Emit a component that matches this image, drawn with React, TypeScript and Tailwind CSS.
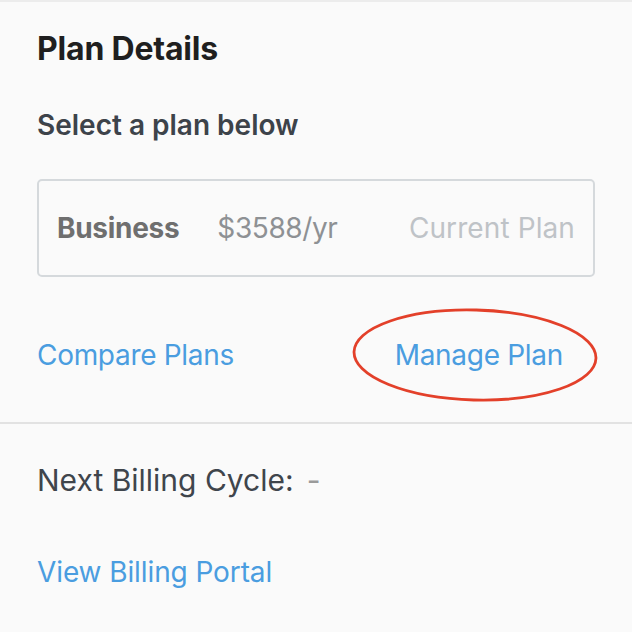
export default function App() {
  return (
    <div
      className="min-h-[632px] w-[632px] border-t-2 border-[#ececec] bg-[#fafafa]"
      style={{ fontFamily: 'Inter, "Noto Sans", sans-serif' }}
    >
      {/* Plan section */}
      <div className="px-[37px] pt-[27px]">
        <h1 className="text-[32px] leading-[40px] font-bold tracking-[-0.2px] text-[#1f1f1f]">Plan Details</h1>
        <h2 className="mt-[38px] text-[28px] leading-[36px] font-semibold text-[#3d434a]">Select a plan below</h2>

        <div className="mt-[36px] flex h-[98px] items-center rounded-[5px] border-2 border-[#d5d9dc] px-[18px] text-[28px] leading-[36px]">
          <span className="font-bold tracking-[-0.3px] text-[#6f6f6f]">Business</span>
          <span className="ml-[38px] tracking-[-0.4px] text-[#8e9194]">$3588/yr</span>
          <span className="ml-auto tracking-[0.1px] text-[#bfc3c7]">Current Plan</span>
        </div>

        <div className="mt-[60px] flex items-center justify-between pr-[32px] text-[28px] leading-[36px] tracking-[-0.3px] text-[#4a9de0]">
          <a href="#">Compare Plans</a>
          <a href="#" className="relative">
            Manage Plan
            <svg
              className="pointer-events-none absolute left-[-43px] top-[-29px]"
              width="246"
              height="94"
              viewBox="0 0 246 94"
            >
              <ellipse
                cx="123"
                cy="47"
                rx="121"
                ry="45"
                fill="none"
                stroke="#e3402a"
                strokeWidth="2.8"
                transform="rotate(1.5 123 47)"
              />
            </svg>
          </a>
        </div>
      </div>

      <div className="mt-[49px] h-[2px] bg-[#e2e2e2]" />

      {/* Billing section */}
      <div className="px-[37px] pt-[38px]">
        <p className="text-[30px] leading-[36px] text-[#3f454c]">
          Next Billing Cycle:<span className="ml-[13px] text-[#9a9a9a]">-</span>
        </p>
        <a href="#" className="mt-[56px] block text-[28px] leading-[36px] tracking-[-0.1px] text-[#4a9de0]">
          View Billing Portal
        </a>
      </div>
    </div>
  );
}
